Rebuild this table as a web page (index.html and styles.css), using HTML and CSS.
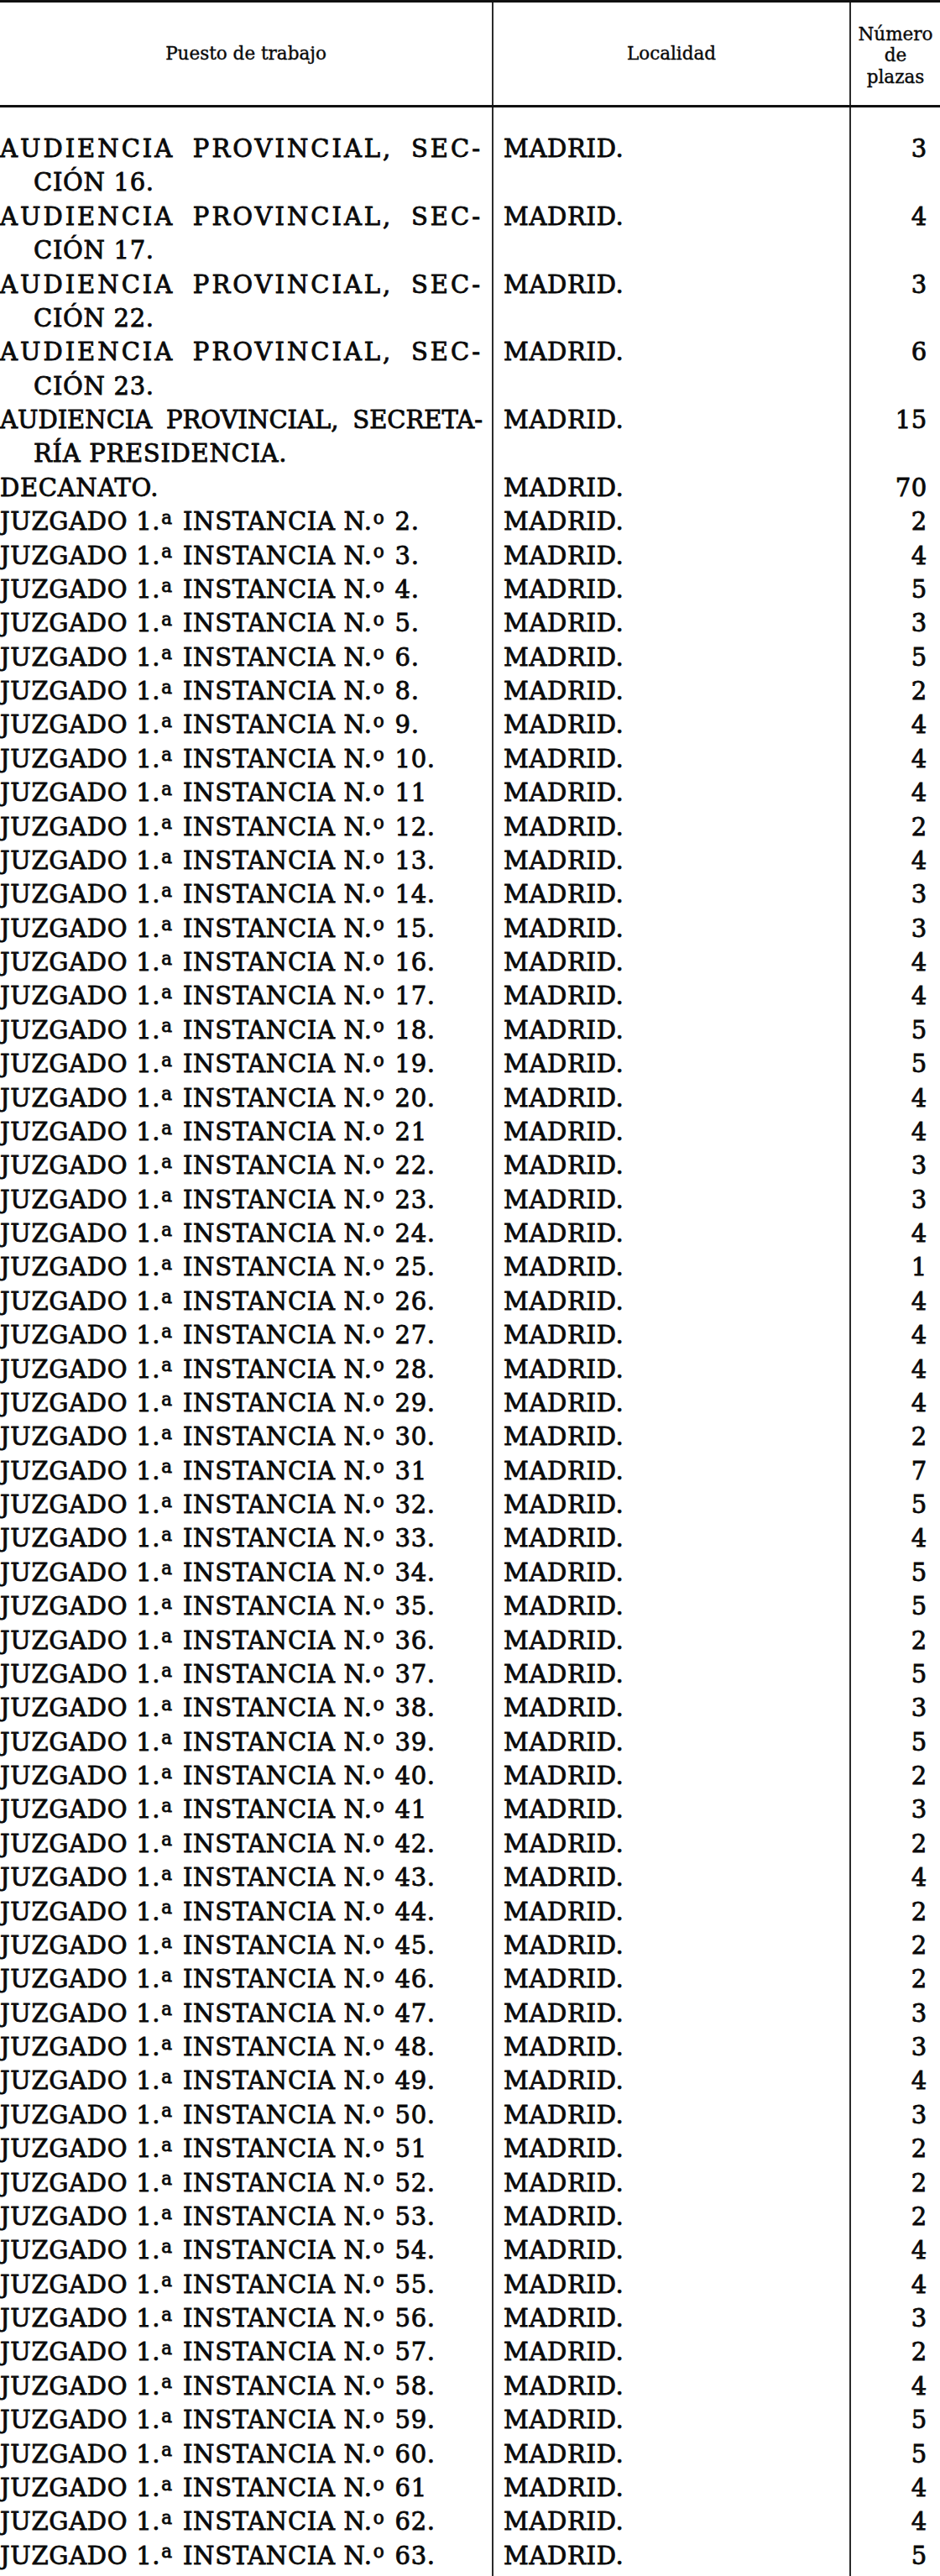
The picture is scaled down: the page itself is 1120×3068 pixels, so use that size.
FILE: index.html
```html
<!DOCTYPE html>
<html lang="es">
<head>
<meta charset="utf-8">
<title>Puestos de trabajo</title>
<link rel="stylesheet" href="styles.css">
</head>
<body>
<div class="plazas">
<div class="row head">
<div class="cell h1">Puesto de trabajo</div>
<div class="cell h2">Localidad</div>
<div class="cell h3">Número<br>de<br>plazas</div>
</div>
<div class="body">
<div class="row first"><div class="cell c1"><span class="j">AUDIENCIA PROVINCIAL, SEC-</span><span class="cont">CIÓN 16.</span></div><div class="cell c2">MADRID.</div><div class="cell c3">3</div></div>
<div class="row"><div class="cell c1"><span class="j">AUDIENCIA PROVINCIAL, SEC-</span><span class="cont">CIÓN 17.</span></div><div class="cell c2">MADRID.</div><div class="cell c3">4</div></div>
<div class="row"><div class="cell c1"><span class="j">AUDIENCIA PROVINCIAL, SEC-</span><span class="cont">CIÓN 22.</span></div><div class="cell c2">MADRID.</div><div class="cell c3">3</div></div>
<div class="row"><div class="cell c1"><span class="j">AUDIENCIA PROVINCIAL, SEC-</span><span class="cont">CIÓN 23.</span></div><div class="cell c2">MADRID.</div><div class="cell c3">6</div></div>
<div class="row"><div class="cell c1"><span class="j tight">AUDIENCIA PROVINCIAL, SECRETA-</span><span class="cont">RÍA PRESIDENCIA.</span></div><div class="cell c2">MADRID.</div><div class="cell c3">15</div></div>
<div class="row"><div class="cell c1">DECANATO.</div><div class="cell c2">MADRID.</div><div class="cell c3">70</div></div>
<div class="row"><div class="cell c1">JUZGADO 1.<span class="sup">a</span> INSTANCIA N.<span class="sup">o</span> 2.</div><div class="cell c2">MADRID.</div><div class="cell c3">2</div></div>
<div class="row"><div class="cell c1">JUZGADO 1.<span class="sup">a</span> INSTANCIA N.<span class="sup">o</span> 3.</div><div class="cell c2">MADRID.</div><div class="cell c3">4</div></div>
<div class="row"><div class="cell c1">JUZGADO 1.<span class="sup">a</span> INSTANCIA N.<span class="sup">o</span> 4.</div><div class="cell c2">MADRID.</div><div class="cell c3">5</div></div>
<div class="row"><div class="cell c1">JUZGADO 1.<span class="sup">a</span> INSTANCIA N.<span class="sup">o</span> 5.</div><div class="cell c2">MADRID.</div><div class="cell c3">3</div></div>
<div class="row"><div class="cell c1">JUZGADO 1.<span class="sup">a</span> INSTANCIA N.<span class="sup">o</span> 6.</div><div class="cell c2">MADRID.</div><div class="cell c3">5</div></div>
<div class="row"><div class="cell c1">JUZGADO 1.<span class="sup">a</span> INSTANCIA N.<span class="sup">o</span> 8.</div><div class="cell c2">MADRID.</div><div class="cell c3">2</div></div>
<div class="row"><div class="cell c1">JUZGADO 1.<span class="sup">a</span> INSTANCIA N.<span class="sup">o</span> 9.</div><div class="cell c2">MADRID.</div><div class="cell c3">4</div></div>
<div class="row"><div class="cell c1">JUZGADO 1.<span class="sup">a</span> INSTANCIA N.<span class="sup">o</span> 10.</div><div class="cell c2">MADRID.</div><div class="cell c3">4</div></div>
<div class="row"><div class="cell c1">JUZGADO 1.<span class="sup">a</span> INSTANCIA N.<span class="sup">o</span> 11</div><div class="cell c2">MADRID.</div><div class="cell c3">4</div></div>
<div class="row"><div class="cell c1">JUZGADO 1.<span class="sup">a</span> INSTANCIA N.<span class="sup">o</span> 12.</div><div class="cell c2">MADRID.</div><div class="cell c3">2</div></div>
<div class="row"><div class="cell c1">JUZGADO 1.<span class="sup">a</span> INSTANCIA N.<span class="sup">o</span> 13.</div><div class="cell c2">MADRID.</div><div class="cell c3">4</div></div>
<div class="row"><div class="cell c1">JUZGADO 1.<span class="sup">a</span> INSTANCIA N.<span class="sup">o</span> 14.</div><div class="cell c2">MADRID.</div><div class="cell c3">3</div></div>
<div class="row"><div class="cell c1">JUZGADO 1.<span class="sup">a</span> INSTANCIA N.<span class="sup">o</span> 15.</div><div class="cell c2">MADRID.</div><div class="cell c3">3</div></div>
<div class="row"><div class="cell c1">JUZGADO 1.<span class="sup">a</span> INSTANCIA N.<span class="sup">o</span> 16.</div><div class="cell c2">MADRID.</div><div class="cell c3">4</div></div>
<div class="row"><div class="cell c1">JUZGADO 1.<span class="sup">a</span> INSTANCIA N.<span class="sup">o</span> 17.</div><div class="cell c2">MADRID.</div><div class="cell c3">4</div></div>
<div class="row"><div class="cell c1">JUZGADO 1.<span class="sup">a</span> INSTANCIA N.<span class="sup">o</span> 18.</div><div class="cell c2">MADRID.</div><div class="cell c3">5</div></div>
<div class="row"><div class="cell c1">JUZGADO 1.<span class="sup">a</span> INSTANCIA N.<span class="sup">o</span> 19.</div><div class="cell c2">MADRID.</div><div class="cell c3">5</div></div>
<div class="row"><div class="cell c1">JUZGADO 1.<span class="sup">a</span> INSTANCIA N.<span class="sup">o</span> 20.</div><div class="cell c2">MADRID.</div><div class="cell c3">4</div></div>
<div class="row"><div class="cell c1">JUZGADO 1.<span class="sup">a</span> INSTANCIA N.<span class="sup">o</span> 21</div><div class="cell c2">MADRID.</div><div class="cell c3">4</div></div>
<div class="row"><div class="cell c1">JUZGADO 1.<span class="sup">a</span> INSTANCIA N.<span class="sup">o</span> 22.</div><div class="cell c2">MADRID.</div><div class="cell c3">3</div></div>
<div class="row"><div class="cell c1">JUZGADO 1.<span class="sup">a</span> INSTANCIA N.<span class="sup">o</span> 23.</div><div class="cell c2">MADRID.</div><div class="cell c3">3</div></div>
<div class="row"><div class="cell c1">JUZGADO 1.<span class="sup">a</span> INSTANCIA N.<span class="sup">o</span> 24.</div><div class="cell c2">MADRID.</div><div class="cell c3">4</div></div>
<div class="row"><div class="cell c1">JUZGADO 1.<span class="sup">a</span> INSTANCIA N.<span class="sup">o</span> 25.</div><div class="cell c2">MADRID.</div><div class="cell c3">1</div></div>
<div class="row"><div class="cell c1">JUZGADO 1.<span class="sup">a</span> INSTANCIA N.<span class="sup">o</span> 26.</div><div class="cell c2">MADRID.</div><div class="cell c3">4</div></div>
<div class="row"><div class="cell c1">JUZGADO 1.<span class="sup">a</span> INSTANCIA N.<span class="sup">o</span> 27.</div><div class="cell c2">MADRID.</div><div class="cell c3">4</div></div>
<div class="row"><div class="cell c1">JUZGADO 1.<span class="sup">a</span> INSTANCIA N.<span class="sup">o</span> 28.</div><div class="cell c2">MADRID.</div><div class="cell c3">4</div></div>
<div class="row"><div class="cell c1">JUZGADO 1.<span class="sup">a</span> INSTANCIA N.<span class="sup">o</span> 29.</div><div class="cell c2">MADRID.</div><div class="cell c3">4</div></div>
<div class="row"><div class="cell c1">JUZGADO 1.<span class="sup">a</span> INSTANCIA N.<span class="sup">o</span> 30.</div><div class="cell c2">MADRID.</div><div class="cell c3">2</div></div>
<div class="row"><div class="cell c1">JUZGADO 1.<span class="sup">a</span> INSTANCIA N.<span class="sup">o</span> 31</div><div class="cell c2">MADRID.</div><div class="cell c3">7</div></div>
<div class="row"><div class="cell c1">JUZGADO 1.<span class="sup">a</span> INSTANCIA N.<span class="sup">o</span> 32.</div><div class="cell c2">MADRID.</div><div class="cell c3">5</div></div>
<div class="row"><div class="cell c1">JUZGADO 1.<span class="sup">a</span> INSTANCIA N.<span class="sup">o</span> 33.</div><div class="cell c2">MADRID.</div><div class="cell c3">4</div></div>
<div class="row"><div class="cell c1">JUZGADO 1.<span class="sup">a</span> INSTANCIA N.<span class="sup">o</span> 34.</div><div class="cell c2">MADRID.</div><div class="cell c3">5</div></div>
<div class="row"><div class="cell c1">JUZGADO 1.<span class="sup">a</span> INSTANCIA N.<span class="sup">o</span> 35.</div><div class="cell c2">MADRID.</div><div class="cell c3">5</div></div>
<div class="row"><div class="cell c1">JUZGADO 1.<span class="sup">a</span> INSTANCIA N.<span class="sup">o</span> 36.</div><div class="cell c2">MADRID.</div><div class="cell c3">2</div></div>
<div class="row"><div class="cell c1">JUZGADO 1.<span class="sup">a</span> INSTANCIA N.<span class="sup">o</span> 37.</div><div class="cell c2">MADRID.</div><div class="cell c3">5</div></div>
<div class="row"><div class="cell c1">JUZGADO 1.<span class="sup">a</span> INSTANCIA N.<span class="sup">o</span> 38.</div><div class="cell c2">MADRID.</div><div class="cell c3">3</div></div>
<div class="row"><div class="cell c1">JUZGADO 1.<span class="sup">a</span> INSTANCIA N.<span class="sup">o</span> 39.</div><div class="cell c2">MADRID.</div><div class="cell c3">5</div></div>
<div class="row"><div class="cell c1">JUZGADO 1.<span class="sup">a</span> INSTANCIA N.<span class="sup">o</span> 40.</div><div class="cell c2">MADRID.</div><div class="cell c3">2</div></div>
<div class="row"><div class="cell c1">JUZGADO 1.<span class="sup">a</span> INSTANCIA N.<span class="sup">o</span> 41</div><div class="cell c2">MADRID.</div><div class="cell c3">3</div></div>
<div class="row"><div class="cell c1">JUZGADO 1.<span class="sup">a</span> INSTANCIA N.<span class="sup">o</span> 42.</div><div class="cell c2">MADRID.</div><div class="cell c3">2</div></div>
<div class="row"><div class="cell c1">JUZGADO 1.<span class="sup">a</span> INSTANCIA N.<span class="sup">o</span> 43.</div><div class="cell c2">MADRID.</div><div class="cell c3">4</div></div>
<div class="row"><div class="cell c1">JUZGADO 1.<span class="sup">a</span> INSTANCIA N.<span class="sup">o</span> 44.</div><div class="cell c2">MADRID.</div><div class="cell c3">2</div></div>
<div class="row"><div class="cell c1">JUZGADO 1.<span class="sup">a</span> INSTANCIA N.<span class="sup">o</span> 45.</div><div class="cell c2">MADRID.</div><div class="cell c3">2</div></div>
<div class="row"><div class="cell c1">JUZGADO 1.<span class="sup">a</span> INSTANCIA N.<span class="sup">o</span> 46.</div><div class="cell c2">MADRID.</div><div class="cell c3">2</div></div>
<div class="row"><div class="cell c1">JUZGADO 1.<span class="sup">a</span> INSTANCIA N.<span class="sup">o</span> 47.</div><div class="cell c2">MADRID.</div><div class="cell c3">3</div></div>
<div class="row"><div class="cell c1">JUZGADO 1.<span class="sup">a</span> INSTANCIA N.<span class="sup">o</span> 48.</div><div class="cell c2">MADRID.</div><div class="cell c3">3</div></div>
<div class="row"><div class="cell c1">JUZGADO 1.<span class="sup">a</span> INSTANCIA N.<span class="sup">o</span> 49.</div><div class="cell c2">MADRID.</div><div class="cell c3">4</div></div>
<div class="row"><div class="cell c1">JUZGADO 1.<span class="sup">a</span> INSTANCIA N.<span class="sup">o</span> 50.</div><div class="cell c2">MADRID.</div><div class="cell c3">3</div></div>
<div class="row"><div class="cell c1">JUZGADO 1.<span class="sup">a</span> INSTANCIA N.<span class="sup">o</span> 51</div><div class="cell c2">MADRID.</div><div class="cell c3">2</div></div>
<div class="row"><div class="cell c1">JUZGADO 1.<span class="sup">a</span> INSTANCIA N.<span class="sup">o</span> 52.</div><div class="cell c2">MADRID.</div><div class="cell c3">2</div></div>
<div class="row"><div class="cell c1">JUZGADO 1.<span class="sup">a</span> INSTANCIA N.<span class="sup">o</span> 53.</div><div class="cell c2">MADRID.</div><div class="cell c3">2</div></div>
<div class="row"><div class="cell c1">JUZGADO 1.<span class="sup">a</span> INSTANCIA N.<span class="sup">o</span> 54.</div><div class="cell c2">MADRID.</div><div class="cell c3">4</div></div>
<div class="row"><div class="cell c1">JUZGADO 1.<span class="sup">a</span> INSTANCIA N.<span class="sup">o</span> 55.</div><div class="cell c2">MADRID.</div><div class="cell c3">4</div></div>
<div class="row"><div class="cell c1">JUZGADO 1.<span class="sup">a</span> INSTANCIA N.<span class="sup">o</span> 56.</div><div class="cell c2">MADRID.</div><div class="cell c3">3</div></div>
<div class="row"><div class="cell c1">JUZGADO 1.<span class="sup">a</span> INSTANCIA N.<span class="sup">o</span> 57.</div><div class="cell c2">MADRID.</div><div class="cell c3">2</div></div>
<div class="row"><div class="cell c1">JUZGADO 1.<span class="sup">a</span> INSTANCIA N.<span class="sup">o</span> 58.</div><div class="cell c2">MADRID.</div><div class="cell c3">4</div></div>
<div class="row"><div class="cell c1">JUZGADO 1.<span class="sup">a</span> INSTANCIA N.<span class="sup">o</span> 59.</div><div class="cell c2">MADRID.</div><div class="cell c3">5</div></div>
<div class="row"><div class="cell c1">JUZGADO 1.<span class="sup">a</span> INSTANCIA N.<span class="sup">o</span> 60.</div><div class="cell c2">MADRID.</div><div class="cell c3">5</div></div>
<div class="row"><div class="cell c1">JUZGADO 1.<span class="sup">a</span> INSTANCIA N.<span class="sup">o</span> 61</div><div class="cell c2">MADRID.</div><div class="cell c3">4</div></div>
<div class="row"><div class="cell c1">JUZGADO 1.<span class="sup">a</span> INSTANCIA N.<span class="sup">o</span> 62.</div><div class="cell c2">MADRID.</div><div class="cell c3">4</div></div>
<div class="row last"><div class="cell c1">JUZGADO 1.<span class="sup">a</span> INSTANCIA N.<span class="sup">o</span> 63.</div><div class="cell c2">MADRID.</div><div class="cell c3">5</div></div>
</div>
</div>
</body>
</html>
```

FILE: styles.css
```css
html, body {
  margin: 0;
  padding: 0;
  background: #ffffff;
}

.plazas {
  width: 1120px;
  display: flex;
  flex-direction: column;
  font-family: "DejaVu Serif", "Liberation Serif", serif;
  color: #0a0a0a;
  -webkit-text-stroke: 0.85px #0a0a0a;
}

.body {
  display: flex;
  flex-direction: column;
}

.row {
  display: grid;
  grid-template-columns: 586px 426px 108px;
}

.head {
  border-top: 3px solid #111111;
  border-bottom: 3px solid #111111;
  height: 122px;
}

.head .cell {
  display: flex;
  align-items: center;
  justify-content: center;
  text-align: center;
  font-size: 21.5px;
  line-height: 25.5px;
  -webkit-text-stroke: 0.4px #0a0a0a;
}

.head .h3 {
  padding-top: 4px;
}

.h2, .h3, .c2, .c3 {
  border-left: 2px solid #2b2b2b;
}

.body .cell {
  font-size: 29px;
  line-height: 40.37px;
  letter-spacing: 0.7px;
  white-space: nowrap;
}

.row.first .cell {
  padding-top: 29px;
}

.row.last .cell {
  padding-bottom: 8px;
}

.c1 {
  padding-right: 11px;
}

.c2 {
  padding-left: 12px;
}

.c3 {
  text-align: right;
  padding-right: 15px;
}

.j {
  display: block;
  text-align: justify;
  text-align-last: justify;
  white-space: normal;
  letter-spacing: 3px;
}

.j.tight {
  letter-spacing: 0;
}

.cont {
  display: block;
  padding-left: 40px;
}

.sup {
  font-size: 0.74em;
  vertical-align: 0.34em;
  line-height: 0;
  letter-spacing: 0;
  padding-left: 1px;
  padding-right: 3px;
}
```
